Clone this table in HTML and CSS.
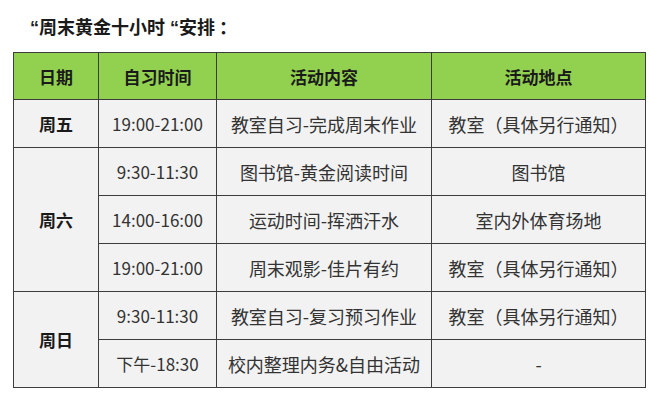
FILE: index.html
```html
<!DOCTYPE html>
<html lang="zh">
<head>
<meta charset="utf-8">
<link rel="stylesheet" href="styles.css">
</head>
<body>
<div class="page">
  <h1 class="title">“周末黄金十小时 “安排<span class="colon">：</span></h1>
  <table class="schedule">
    <colgroup>
      <col class="c1"><col class="c2"><col class="c3"><col class="c4">
    </colgroup>
    <thead>
      <tr><th>日期</th><th>自习时间</th><th>活动内容</th><th>活动地点</th></tr>
    </thead>
    <tbody>
      <tr><td class="day">周五</td><td class="time">19:00-21:00</td><td>教室自习-完成周末作业</td><td>教室（具体另行通知）</td></tr>
      <tr><td class="day" rowspan="3">周六</td><td class="time">9:30-11:30</td><td>图书馆-黄金阅读时间</td><td>图书馆</td></tr>
      <tr><td class="time">14:00-16:00</td><td>运动时间-挥洒汗水</td><td>室内外体育场地</td></tr>
      <tr><td class="time">19:00-21:00</td><td>周末观影-佳片有约</td><td>教室（具体另行通知）</td></tr>
      <tr><td class="day" rowspan="2">周日</td><td class="time">9:30-11:30</td><td>教室自习-复习预习作业</td><td>教室（具体另行通知）</td></tr>
      <tr><td class="time">下午-18:30</td><td>校内整理内务&amp;自由活动</td><td>-</td></tr>
    </tbody>
  </table>
</div>
</body>
</html>
```
FILE: styles.css
```css
html, body {
  margin: 0;
  padding: 0;
  background: #ffffff;
}
.page {
  padding: 17px 15px 0 13px;
  font-family: "Noto Sans CJK SC", "Noto Sans", sans-serif;
  color: #333333;
}
.title {
  margin: 0 0 13px 17px;
  font-family: "Liberation Sans", "Noto Sans CJK SC", sans-serif;
  font-size: 18px;
  line-height: 22px;
  font-weight: bold;
  color: #1a1a1a;
}
.colon {
  padding-left: 4px;
}
.schedule {
  border-collapse: collapse;
  width: 632px;
  table-layout: fixed;
}
.c1 { width: 85px; }
.c2 { width: 118px; }
.c3 { width: 215px; }
.c4 { width: 214px; }
.schedule th,
.schedule td {
  border: 1px solid #3d3d3d;
  text-align: center;
  vertical-align: middle;
  padding: 0;
  white-space: nowrap;
}
.schedule th {
  height: 46px;
  background: #92d050;
  font-size: 17px;
  font-weight: bold;
  color: #1a1a1a;
}
.schedule td {
  height: 47px;
  background: #f2f2f2;
  font-size: 18px;
  color: #333333;
}
.schedule td.time {
  font-size: 17px;
}
.schedule td.day {
  font-size: 17px;
  font-weight: bold;
  color: #1a1a1a;
}
```
